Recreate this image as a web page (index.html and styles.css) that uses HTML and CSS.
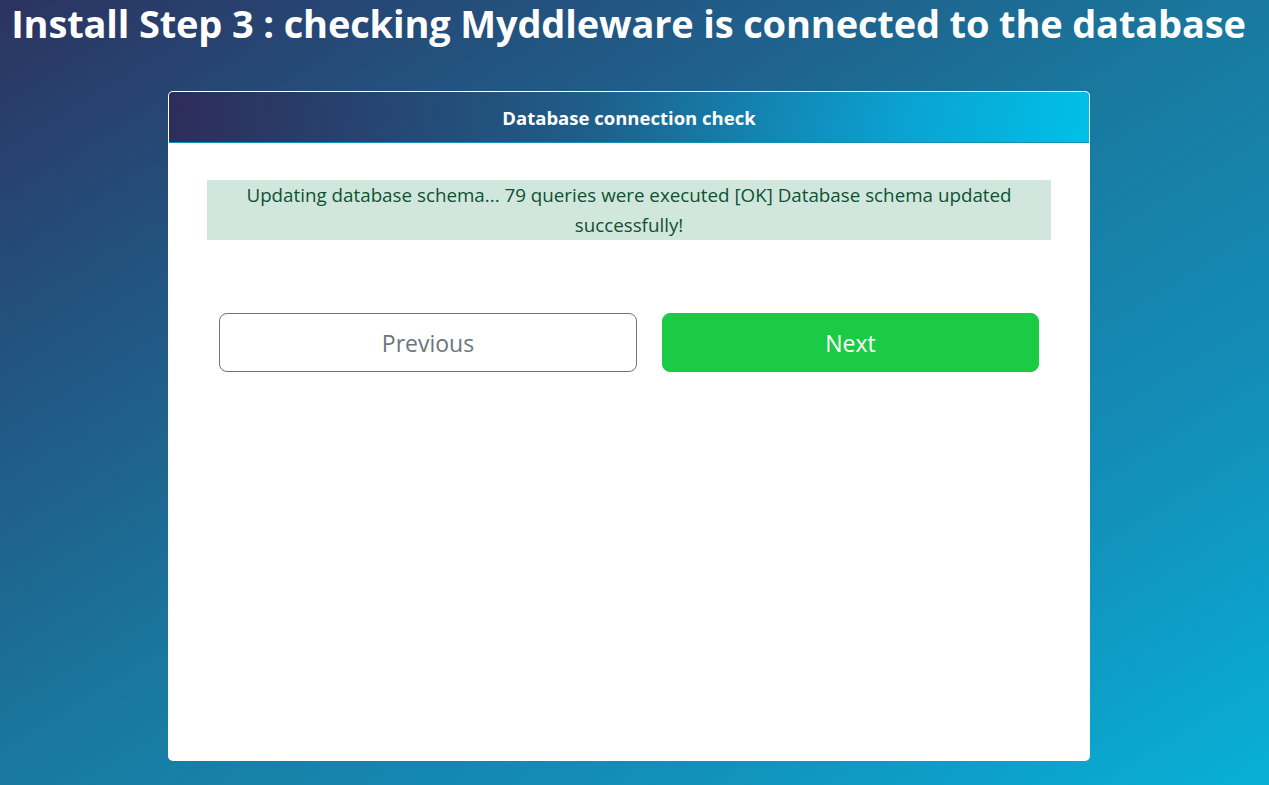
FILE: index.html
```html
<!DOCTYPE html>
<html lang="en">
<head>
<meta charset="utf-8">
<title>Install Step 3</title>
<link rel="stylesheet" href="styles.css">
</head>
<body>
<div class="page">
  <h1 class="title">Install Step 3 : checking Myddleware is connected to the database</h1>
  <div class="card">
    <div class="card-header">Database connection check</div>
    <div class="card-body">
      <div class="alert">Updating database schema... 79 queries were executed [OK] Database schema updated successfully!</div>
      <div class="actions">
        <button class="btn btn-prev" type="button">Previous</button>
        <button class="btn btn-next" type="button">Next</button>
      </div>
    </div>
  </div>
</div>
</body>
</html>
```
FILE: styles.css
```css
html, body {
  margin: 0;
  padding: 0;
  height: 100%;
}
body {
  background: linear-gradient(to bottom right, #2c3360 0%, #225683 25%, #19799f 50%, #128fba 75%, #08b0d6 100%);
  font-family: "Open Sans", "Noto Sans", sans-serif;
  overflow: hidden;
}
.page {
  width: 1257px;
  padding-top: 1px;
}
.title {
  margin: 0;
  font-size: 38px;
  line-height: 44px;
  font-weight: 700;
  color: #fff;
  text-align: center;
  letter-spacing: -0.15px;
}
.card {
  margin: 46px 0 0 168px;
  width: 922px;
  height: 670px;
  background: #fff;
  border: 1px solid rgba(255,255,255,0.6);
  border-radius: 5px;
  box-sizing: border-box;
  overflow: hidden;
  display: flex;
  flex-direction: column;
}
.card-header {
  height: 51px;
  flex: none;
  display: flex;
  align-items: center;
  justify-content: center;
  background: linear-gradient(100deg, #2e2c5a 0%, #1f5d88 45%, #0aa3d3 80%, #00c0e8 100%);
  color: #fff;
  font-weight: 700;
  font-size: 18.5px;
  border-bottom: 1px solid #0e8fb5;
  box-sizing: border-box;
}
.card-body {
  padding: 37px 38px 0 38px;
}
.alert {
  background: #d1e7dd;
  color: #0f5132;
  text-align: center;
  font-size: 18.8px;
  line-height: 30px;
  padding: 0 20px;
}
.actions {
  display: flex;
  gap: 25px;
  margin-top: 73px;
  padding-left: 12px;
}
.btn {
  height: 59px;
  font-family: inherit;
  font-size: 23px;
  border-radius: 8px;
  cursor: pointer;
  box-sizing: border-box;
}
.btn-prev {
  width: 418px;
  background: #fff;
  color: #6c757d;
  border: 1px solid #6c757d;
}
.btn-next {
  width: 377px;
  background: #1ccb45;
  color: #fff;
  border: 1px solid #1ccb45;
}
```
